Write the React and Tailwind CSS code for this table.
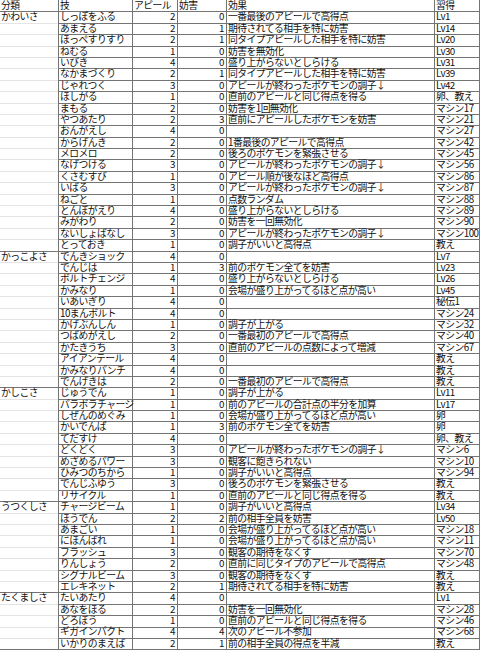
import React from 'react';

const sections = [
  {
    cat: 'かわいさ',
    rows: [
      ['しっぽをふる', 2, 0, '一番最後のアピールで高得点', 'Lv1'],
      ['あまえる', 2, 1, '期待されてる相手を特に妨害', 'Lv14'],
      ['ほっぺすりすり', 2, 1, '同タイプアピールした相手を特に妨害', 'Lv20'],
      ['ねむる', 1, 0, '妨害を無効化', 'Lv30'],
      ['いびき', 4, 0, '盛り上がらないとしらける', 'Lv31'],
      ['なかまづくり', 2, 1, '同タイプアピールした相手を特に妨害', 'Lv39'],
      ['じゃれつく', 3, 0, 'アピールが終わったポケモンの調子↓', 'Lv42'],
      ['ほしがる', 1, 0, '直前のアピールと同じ得点を得る', '卵、教え'],
      ['まもる', 2, 0, '妨害を1回無効化', 'マシン17'],
      ['やつあたり', 2, 3, '直前にアピールしたポケモンを妨害', 'マシン21'],
      ['おんがえし', 4, 0, '', 'マシン27'],
      ['からげんき', 2, 0, '1番最後のアピールで高得点', 'マシン42'],
      ['メロメロ', 2, 0, '後ろのポケモンを緊張させる', 'マシン45'],
      ['なげつける', 3, 0, 'アピールが終わったポケモンの調子↓', 'マシン56'],
      ['くさむすび', 1, 0, 'アピール順が後なほど高得点', 'マシン86'],
      ['いばる', 3, 0, 'アピールが終わったポケモンの調子↓', 'マシン87'],
      ['ねごと', 1, 0, '点数ランダム', 'マシン88'],
      ['とんぼがえり', 4, 0, '盛り上がらないとしらける', 'マシン89'],
      ['みがわり', 2, 0, '妨害を一回無効化', 'マシン90'],
      ['ないしょばなし', 3, 0, 'アピールが終わったポケモンの調子↓', 'マシン100'],
      ['とっておき', 1, 0, '調子がいいと高得点', '教え'],
    ],
  },
  {
    cat: 'かっこよさ',
    rows: [
      ['でんきショック', 4, 0, '', 'Lv7'],
      ['でんじは', 1, 3, '前のポケモン全てを妨害', 'Lv23'],
      ['ボルトチェンジ', 4, 0, '盛り上がらないとしらける', 'Lv26'],
      ['かみなり', 1, 0, '会場が盛り上がってるほど点が高い', 'Lv45'],
      ['いあいぎり', 4, 0, '', '秘伝1'],
      ['10まんボルト', 4, 0, '', 'マシン24'],
      ['かげぶんしん', 1, 0, '調子が上がる', 'マシン32'],
      ['つばめがえし', 2, 0, '一番最初のアピールで高得点', 'マシン40'],
      ['かたきうち', 3, 0, '直前のアピールの点数によって増減', 'マシン67'],
      ['アイアンテール', 4, 0, '', '教え'],
      ['かみなりパンチ', 4, 0, '', '教え'],
      ['でんげきは', 2, 0, '一番最初のアピールで高得点', '教え'],
    ],
  },
  {
    cat: 'かしこさ',
    rows: [
      ['じゅうでん', 1, 0, '調子が上がる', 'Lv11'],
      ['パラボラチャージ', 1, 0, '前のアピールの合計点の半分を加算', 'Lv17'],
      ['しぜんのめぐみ', 1, 0, '会場が盛り上がってるほど点が高い', '卵'],
      ['かいでんぱ', 1, 3, '前のポケモン全てを妨害', '卵'],
      ['てだすけ', 4, 0, '', '卵、教え'],
      ['どくどく', 3, 0, 'アピールが終わったポケモンの調子↓', 'マシン6'],
      ['めざめるパワー', 3, 0, '観客に飽きられない', 'マシン10'],
      ['ひみつのちから', 1, 0, '調子がいいと高得点', 'マシン94'],
      ['でんじふゆう', 3, 0, '後ろのポケモンを緊張させる', '教え'],
      ['リサイクル', 1, 0, '直前のアピールと同じ得点を得る', '教え'],
    ],
  },
  {
    cat: 'うつくしさ',
    rows: [
      ['チャージビーム', 1, 0, '調子がいいと高得点', 'Lv34'],
      ['ほうでん', 2, 2, '前の相手全員を妨害', 'Lv50'],
      ['あまごい', 1, 0, '会場が盛り上がってるほど点が高い', 'マシン18'],
      ['にほんばれ', 1, 0, '会場が盛り上がってるほど点が高い', 'マシン11'],
      ['フラッシュ', 3, 0, '観客の期待をなくす', 'マシン70'],
      ['りんしょう', 2, 0, '直前に同じタイプのアピールで高得点', 'マシン48'],
      ['シグナルビーム', 3, 0, '観客の期待をなくす', '教え'],
      ['エレキネット', 2, 1, '期待されてる相手を特に妨害', '教え'],
    ],
  },
  {
    cat: 'たくましさ',
    rows: [
      ['たいあたり', 4, 0, '', 'Lv1'],
      ['あなをほる', 2, 0, '妨害を一回無効化', 'マシン28'],
      ['どろぼう', 1, 0, '直前のアピールと同じ得点を得る', 'マシン46'],
      ['ギガインパクト', 4, 4, '次のアピール不参加', 'マシン68'],
      ['いかりのまえば', 2, 1, '前の相手全員の得点を半減', '教え'],
    ],
  },
];

const rowGrid = 'grid grid-cols-[58px_75px_45px_49px_208px_45px] h-[11.4px] leading-[11.4px]';
const cell = 'border-r border-b border-[#747474] whitespace-nowrap';

export default function App() {
  return (
    <div className="w-[480px] h-[654px] bg-white text-[9.8px] tracking-[-0.55px] text-[#111] overflow-hidden [font-family:'Noto_Sans_CJK_JP','Noto_Sans',sans-serif]">
      <div className={rowGrid}>
        <div className="pl-[1px] border-b border-[#747474]">分類</div>
        <div className={`${cell} border-l pl-[1px]`}>技</div>
        <div className={`${cell} pl-[1px]`}>アピール</div>
        <div className={`${cell} pl-[1px]`}>妨害</div>
        <div className={`${cell} pl-[1px]`}>効果</div>
        <div className={`${cell} pl-[1px]`}>習得</div>
      </div>
      {sections.map((s) =>
        s.rows.map((r, i) => (
          <div key={s.cat + r[0]} className={rowGrid}>
            <div
              className={`pl-[1px] border-b ${
                i === s.rows.length - 1 ? 'border-[#747474]' : 'border-[#e4e4e4]'
              }`}
            >
              {i === 0 ? s.cat : ''}
            </div>
            <div className={`${cell} border-l pl-[1px]`}>{r[0]}</div>
            <div className={`${cell} text-right pr-[2px]`}>{r[1]}</div>
            <div className={`${cell} text-right pr-[2px]`}>{r[2]}</div>
            <div className={`${cell} pl-[1px]`}>{r[3]}</div>
            <div className={`${cell} pl-[1px]`}>{r[4]}</div>
          </div>
        ))
      )}
    </div>
  );
}
